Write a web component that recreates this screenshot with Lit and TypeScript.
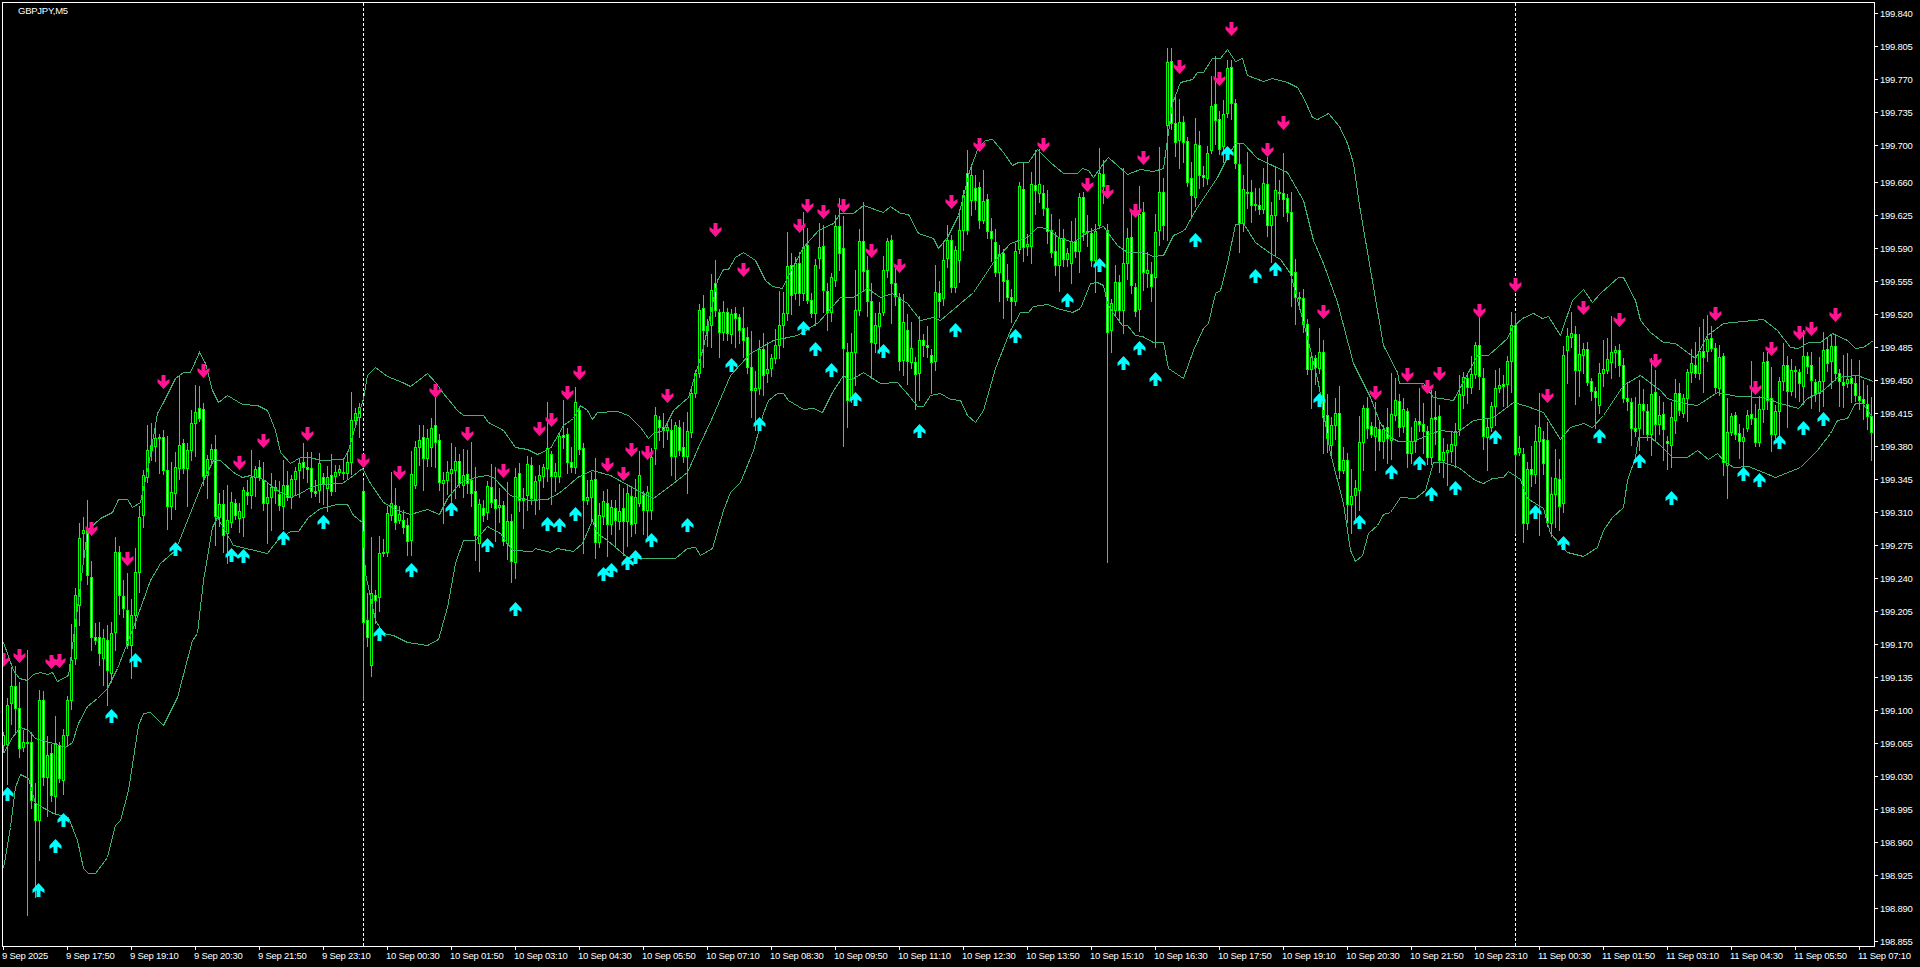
import { LitElement, html, css, svg } from 'lit';
import { customElement } from 'lit/decorators.js';

// [x, body top, body bottom] in chart pixels, one entry per M5 bar
const BODIES: number[][] = [
  [3,735,745],[7,705,744],[11,686,703],[15,686,708],[19,708,748],[23,742,747],[27,742,743],[31,742,800],[35,803,820],[39,700,820],
  [43,700,777],[47,755,777],[51,753,795],[55,743,796],[59,745,778],[63,735,780],[67,700,735],[71,660,700],[75,595,658],[79,538,605],
  [83,530,533],[87,530,575],[91,577,637],[95,637,640],[99,637,653],[103,638,658],[107,640,670],[111,633,673],[115,552,632],[119,552,595],
  [123,596,608],[127,610,645],[131,615,645],[135,572,615],[139,517,572],[143,475,515],[147,450,477],[151,445,450],[155,438,446],[159,437,438],
  [163,437,470],[167,470,506],[171,492,506],[175,467,493],[179,445,468],[183,443,468],[187,450,468],[191,423,450],[195,412,423],[199,408,418],
  [203,409,476],[207,459,475],[211,449,459],[215,449,516],[219,504,517],[223,504,535],[227,520,533],[231,502,522],[235,503,515],[239,511,518],
  [243,490,517],[247,492,495],[251,477,495],[255,469,477],[259,467,477],[263,480,503],[267,497,503],[271,487,497],[275,487,490],[279,494,505],
  [283,485,506],[287,485,497],[291,479,497],[295,471,479],[299,463,470],[303,462,467],[307,467,469],[311,468,491],[315,491,493],[319,463,490],
  [323,477,483],[327,477,488],[331,475,491],[335,472,476],[339,469,472],[343,472,473],[347,462,473],[351,420,462],[355,413,420],[359,407,417],
  [363,491,622],[367,620,637],[371,593,665],[375,595,600],[379,553,597],[383,552,553],[387,513,552],[391,503,515],[395,505,522],[399,514,520],
  [403,520,527],[407,525,541],[411,474,540],[415,447,485],[419,440,447],[423,437,458],[427,438,458],[431,428,447],[435,425,442],[439,440,482],
  [443,480,483],[447,472,480],[451,469,473],[455,461,470],[459,461,483],[463,475,485],[467,474,483],[471,480,493],[475,491,535],[479,504,543],
  [483,508,515],[487,486,512],[491,487,502],[495,499,508],[499,505,507],[503,505,541],[507,521,543],[511,521,561],[515,477,562],[519,473,500],
  [523,498,500],[527,464,495],[531,465,498],[535,481,499],[539,475,480],[543,467,476],[547,448,468],[551,454,476],[555,472,476],[559,436,476],
  [563,435,437],[567,434,462],[571,462,467],[575,402,467],[579,410,449],[583,448,500],[587,497,500],[591,480,497],[595,479,542],[599,515,542],
  [603,501,516],[607,503,524],[611,507,524],[615,508,520],[619,511,521],[623,508,521],[627,493,521],[631,496,524],[635,497,523],[639,475,503],
  [643,495,510],[647,492,510],[651,457,510],[655,415,448],[659,420,427],[663,427,430],[667,427,430],[671,430,456],[675,425,456],[679,427,450],
  [683,447,456],[687,431,456],[691,393,432],[695,373,393],[699,310,373],[703,308,330],[707,326,330],[711,290,325],[715,283,310],[719,312,332],
  [723,312,332],[727,312,333],[731,314,334],[735,313,318],[739,317,330],[743,328,340],[747,337,367],[751,367,390],[755,388,390],[759,349,388],
  [763,349,375],[767,369,373],[771,358,368],[775,345,358],[779,325,345],[783,313,325],[787,266,313],[791,265,295],[795,263,293],[799,263,293],
  [803,247,293],[807,245,300],[811,300,313],[815,265,313],[819,247,258],[823,246,290],[827,291,312],[831,277,312],[835,226,280],[839,226,253],
  [843,248,348],[847,352,400],[851,352,398],[855,310,352],[859,241,310],[863,241,271],[867,270,301],[871,301,342],[875,325,343],[879,313,326],
  [883,270,312],[887,241,270],[891,240,283],[895,283,296],[899,297,361],[903,322,360],[907,330,361],[911,348,362],[915,362,374],[919,340,373],
  [923,340,345],[927,345,347],[931,355,362],[935,292,361],[939,293,301],[943,260,298],[947,240,258],[951,240,287],[955,250,287],[959,230,260],
  [963,195,230],[967,173,230],[971,175,200],[975,188,200],[979,187,220],[983,201,220],[987,199,231],[991,231,238],[995,242,272],[999,254,272],
  [1003,253,281],[1007,280,297],[1011,297,301],[1015,251,301],[1019,186,249],[1023,189,247],[1027,244,246],[1031,184,246],[1035,185,190],[1039,184,193],
  [1043,193,208],[1047,208,231],[1051,230,252],[1055,251,265],[1059,238,265],[1063,238,259],[1067,253,259],[1071,241,263],[1075,241,251],[1079,197,251],
  [1083,197,232],[1087,231,232],[1091,233,260],[1095,231,260],[1099,173,225],[1103,174,186],[1107,230,332],[1111,303,330],[1115,282,310],[1119,282,310],
  [1123,263,310],[1127,238,263],[1131,237,285],[1135,287,311],[1139,214,309],[1143,212,272],[1147,270,273],[1151,274,286],[1155,232,277],[1159,192,230],
  [1163,192,225],[1167,62,125],[1171,61,123],[1175,123,142],[1179,122,140],[1183,122,142],[1187,141,182],[1191,178,195],[1195,144,197],[1199,145,175],
  [1203,175,177],[1207,153,178],[1211,106,150],[1215,104,120],[1219,119,149],[1223,114,146],[1227,68,113],[1231,67,103],[1235,103,163],[1239,164,223],
  [1243,189,223],[1247,192,193],[1251,192,205],[1255,204,205],[1259,205,209],[1263,183,209],[1267,184,225],[1271,215,225],[1275,190,215],[1279,192,193],
  [1283,193,199],[1287,198,212],[1291,212,275],[1295,272,297],[1299,297,298],[1303,298,324],[1307,324,369],[1311,357,369],[1315,358,367],[1319,352,368],
  [1323,352,417],[1327,415,438],[1331,425,445],[1335,413,425],[1339,413,470],[1343,460,470],[1347,460,504],[1351,496,504],[1355,488,495],[1359,442,490],
  [1363,408,442],[1367,408,428],[1371,426,434],[1375,427,436],[1379,429,441],[1383,429,441],[1387,427,438],[1391,414,440],[1395,400,415],[1399,401,427],
  [1403,409,426],[1407,411,453],[1411,441,453],[1415,421,441],[1419,421,424],[1423,424,431],[1427,431,457],[1431,418,457],[1435,417,419],[1439,416,460],
  [1443,452,460],[1447,450,452],[1451,444,451],[1455,431,445],[1459,394,429],[1463,377,395],[1467,378,387],[1471,374,387],[1475,345,374],[1479,345,376],
  [1483,378,436],[1487,427,437],[1491,406,427],[1495,388,406],[1499,385,388],[1503,384,386],[1507,361,384],[1511,325,361],[1515,325,454],[1519,448,452],
  [1523,454,523],[1527,469,523],[1531,469,474],[1535,441,474],[1539,427,441],[1543,439,463],[1547,440,522],[1551,494,523],[1555,478,494],[1559,479,506],
  [1563,355,503],[1567,336,350],[1571,333,337],[1575,334,370],[1579,354,370],[1583,349,355],[1587,349,382],[1591,381,391],[1595,391,397],[1599,373,405],
  [1603,369,373],[1607,359,370],[1611,352,362],[1615,350,352],[1619,350,365],[1623,365,398],[1627,398,401],[1631,402,428],[1635,428,431],[1639,404,428],
  [1643,404,410],[1647,411,434],[1651,394,434],[1655,392,424],[1659,415,424],[1663,414,429],[1667,441,443],[1671,417,445],[1675,393,420],[1679,393,410],
  [1683,398,413],[1687,372,398],[1691,363,372],[1695,365,373],[1699,351,373],[1703,351,357],[1707,339,351],[1711,338,348],[1715,348,387],[1719,357,388],
  [1723,356,462],[1727,432,465],[1731,416,432],[1735,415,434],[1739,433,441],[1743,437,441],[1747,415,428],[1751,414,418],[1755,418,442],[1759,409,442],
  [1763,362,409],[1767,361,400],[1771,398,434],[1775,411,434],[1779,381,411],[1783,365,381],[1787,365,391],[1791,370,391],[1795,370,371],[1799,372,383],
  [1803,356,386],[1807,356,366],[1811,365,380],[1815,382,393],[1819,381,393],[1823,350,381],[1827,349,363],[1831,346,361],[1835,346,373],[1839,373,381],
  [1843,382,385],[1847,379,383],[1851,378,383],[1855,383,395],[1859,396,400],[1863,399,403],[1867,404,416],[1871,416,432],
];

// wicks that stand out; 0 = keep the generated end
const WICKS: Record<number, number[]> = {
  27:[650,915],35:[783,897],39:[690,860],87:[500,0],107:[625,705],179:[376,0],199:[386,0],215:[0,545],223:[0,552],
  363:[0,700],371:[537,676],391:[472,0],471:[442,0],475:[0,560],511:[0,582],515:[0,578],547:[402,0],575:[387,0],583:[0,553],
  687:[0,493],715:[260,0],719:[0,357],755:[0,430],787:[232,0],803:[212,0],843:[216,446],847:[0,427],863:[202,0],919:[0,400],
  1011:[0,322],1015:[0,305],1031:[172,0],1035:[150,0],1099:[148,0],1103:[160,0],1107:[0,562],1123:[168,333],1155:[0,347],1159:[147,245],
  1167:[48,240],1171:[48,0],1215:[56,0],1227:[60,0],1231:[60,0],1239:[0,252],1247:[152,0],1263:[168,0],1271:[0,262],1283:[153,0],
  1319:[328,0],1351:[0,533],1375:[0,470],1395:[378,0],1419:[388,0],1439:[405,472],1487:[0,470],1511:[312,0],1515:[313,533],1523:[0,542],
  1539:[393,535],1559:[0,530],1563:[0,512],1639:[380,0],1671:[0,467],1699:[327,0],1707:[315,0],1727:[0,498],1739:[0,458],1751:[361,0],
  1767:[352,0],1827:[338,0],1851:[359,0],1871:[0,460],
};

const UPPER: number[][] = [
  [3,642],[13,670],[19,678],[27,680],[33,674],[40,672],[47,674],[52,672],[57,681],[68,675],[78,600],[87,530],[100,518],[112,512],[118,499],[127,499],[132,507],[140,502],
  [148,465],[157,413],[163,402],[175,378],[183,372],[190,372],[199,352],[205,363],[212,390],[218,402],[227,395],[242,404],[257,405],[267,410],[275,430],[280,452],[290,463],
  [300,457],[310,457],[320,460],[343,459],[348,450],[363,398],[367,375],[375,367],[387,376],[402,382],[410,386],[418,380],[427,373],[435,382],[443,393],[457,410],[463,415],
  [483,415],[488,422],[503,430],[515,447],[527,449],[537,454],[550,448],[563,425],[573,418],[580,405],[587,410],[592,419],[597,412],[617,411],[628,415],[640,427],[648,438],
  [653,433],[663,430],[673,410],[688,397],[703,347],[717,280],[723,269],[728,269],[735,257],[743,252],[755,260],[765,280],[772,286],[782,288],[788,275],[803,247],[818,230],
  [833,223],[840,213],[853,213],[863,205],[883,212],[890,206],[900,213],[908,214],[918,233],[933,238],[938,248],[947,237],[958,215],[970,168],[978,147],[985,140],[992,139],
  [1003,152],[1012,165],[1018,162],[1028,162],[1037,149],[1050,162],[1063,173],[1077,173],[1082,168],[1088,170],[1093,177],[1103,163],[1108,157],[1127,174],[1140,169],[1153,171],
  [1163,168],[1172,103],[1180,82],[1192,79],[1197,72],[1203,72],[1212,58],[1220,58],[1227,49],[1235,61],[1242,58],[1247,75],[1263,81],[1272,78],[1287,82],[1297,87],[1303,97],
  [1312,117],[1317,119],[1328,113],[1339,126],[1347,143],[1353,163],[1359,205],[1365,240],[1383,345],[1397,372],[1399,383],[1413,383],[1423,383],[1433,397],[1453,400],[1477,355],
  [1488,355],[1507,338],[1512,327],[1522,318],[1533,313],[1542,318],[1548,316],[1560,335],[1572,300],[1583,289],[1592,302],[1600,293],[1618,277],[1623,277],[1635,300],[1640,320],
  [1650,332],[1663,342],[1675,343],[1695,358],[1707,335],[1723,323],[1763,319],[1777,330],[1790,347],[1798,348],[1808,342],[1820,342],[1832,333],[1847,340],[1855,348],[1863,347],[1873,340],
];

const MIDDLE: number[][] = [
  [3,753],[12,737],[20,727],[28,730],[35,738],[53,743],[65,747],[72,742],[78,723],[87,706],[97,698],[107,688],[117,668],[133,627],[150,580],[160,563],[175,550],[187,520],[203,480],
  [213,460],[220,460],[233,472],[242,477],[250,475],[263,479],[277,490],[290,497],[300,493],[310,487],[320,484],[342,483],[353,475],[362,468],[370,483],[383,502],[397,510],[410,514],
  [427,509],[439,514],[447,498],[460,482],[475,477],[487,475],[493,477],[510,495],[528,500],[547,499],[558,493],[567,486],[577,477],[592,470],[610,475],[637,490],[653,498],[673,483],
  [687,472],[698,447],[712,417],[730,375],[750,353],[773,340],[797,335],[818,322],[840,297],[853,297],[867,288],[880,297],[892,293],[907,303],[920,320],[933,317],[940,320],[960,303],
  [973,292],[993,262],[1010,243],[1027,237],[1037,227],[1047,228],[1058,237],[1073,242],[1087,232],[1103,226],[1117,245],[1127,252],[1143,252],[1153,256],[1163,255],[1173,235],[1184,230],
  [1195,210],[1205,195],[1217,177],[1227,157],[1235,143],[1243,143],[1257,158],[1287,172],[1303,200],[1313,240],[1323,263],[1337,302],[1353,363],[1370,397],[1380,423],[1390,437],[1398,441],
  [1413,441],[1427,435],[1440,430],[1457,432],[1473,420],[1493,417],[1513,402],[1527,406],[1543,412],[1560,439],[1570,427],[1583,423],[1592,427],[1603,415],[1623,385],[1640,375],[1660,390],
  [1667,398],[1683,403],[1697,405],[1717,392],[1737,396],[1763,397],[1780,403],[1798,408],[1807,398],[1823,390],[1837,377],[1857,375],[1873,381],
];

const LOWER: number[][] = [
  [3,868],[10,827],[15,787],[20,774],[28,778],[35,803],[53,813],[68,817],[77,840],[83,868],[88,873],[95,873],[107,857],[115,825],[120,820],[128,790],[138,725],[143,713],[150,712],[163,725],
  [177,697],[192,640],[197,633],[203,580],[212,527],[217,517],[233,545],[250,549],[267,553],[277,540],[290,531],[298,531],[308,517],[320,508],[337,504],[347,504],[353,515],[362,522],[365,573],
  [375,620],[383,633],[393,635],[407,642],[427,645],[438,639],[447,607],[455,563],[463,540],[475,540],[487,526],[500,533],[512,550],[532,551],[535,548],[550,552],[557,548],[573,551],[582,543],
  [592,520],[597,533],[607,540],[627,557],[640,558],[657,558],[675,558],[687,548],[695,547],[700,555],[712,548],[723,510],[730,492],[740,482],[753,450],[763,413],[768,400],[777,393],[783,393],
  [788,400],[803,409],[813,408],[822,412],[832,392],[843,375],[850,380],[863,372],[880,383],[897,382],[910,397],[917,406],[923,406],[930,395],[940,393],[950,399],[960,400],[967,415],[975,422],
  [983,410],[995,368],[1010,330],[1020,312],[1028,312],[1033,306],[1047,304],[1057,308],[1072,312],[1080,308],[1090,283],[1097,282],[1103,285],[1107,303],[1113,313],[1122,325],[1127,325],
  [1135,335],[1142,336],[1153,342],[1163,342],[1168,368],[1183,378],[1193,350],[1203,328],[1208,323],[1215,293],[1220,290],[1227,263],[1235,224],[1243,223],[1255,242],[1270,253],[1280,259],
  [1290,273],[1307,337],[1318,383],[1330,453],[1343,503],[1350,550],[1355,561],[1362,555],[1368,533],[1377,525],[1383,514],[1390,512],[1400,497],[1415,498],[1425,490],[1433,462],[1443,462],
  [1458,467],[1475,480],[1483,483],[1492,478],[1503,477],[1508,471],[1520,479],[1527,498],[1543,508],[1550,533],[1567,552],[1583,556],[1597,547],[1603,530],[1612,517],[1623,507],[1627,480],
  [1635,457],[1638,437],[1650,437],[1660,445],[1672,457],[1687,457],[1697,450],[1708,459],[1717,453],[1723,460],[1733,467],[1748,466],[1763,472],[1775,477],[1785,473],[1800,467],[1817,450],
  [1830,433],[1837,420],[1847,418],[1855,403],[1862,403],[1873,418],
];

// [center x, tip y]
const UP_ARROWS: number[][] = [
  [38,883],[55,839],[63,813],[7,787],[111,709],[135,653],[175,542],[231,548],[243,549],[283,531],[323,515],[379,627],[411,563],[451,502],[487,538],[515,602],[547,517],[559,518],[575,507],
  [603,567],[611,563],[627,556],[635,550],[651,533],[687,518],[731,358],[759,417],[803,321],[815,342],[831,363],[855,392],[883,344],[919,424],[955,323],[1015,329],[1067,293],[1099,258],
  [1123,356],[1139,341],[1155,372],[1195,233],[1227,146],[1255,269],[1275,262],[1319,393],[1359,515],[1391,465],[1419,456],[1431,487],[1455,481],[1495,430],[1535,505],[1563,536],[1599,429],
  [1639,454],[1671,491],[1743,467],[1759,473],[1779,435],[1803,421],[1823,412],
];

// [center x, top of shaft y]
const DOWN_ARROWS: number[][] = [
  [3,653],[19,649],[51,655],[59,654],[91,522],[127,552],[163,375],[203,364],[239,456],[263,434],[307,427],[363,454],[399,466],[435,384],[467,427],[503,464],[539,422],[551,413],[567,386],
  [579,366],[607,458],[623,467],[631,443],[647,446],[667,389],[715,223],[743,263],[799,219],[807,199],[823,205],[843,199],[871,244],[899,259],[951,195],[979,138],[1043,138],[1087,178],
  [1107,185],[1135,204],[1143,151],[1179,60],[1219,72],[1231,22],[1267,143],[1283,116],[1323,305],[1375,386],[1407,368],[1427,380],[1439,367],[1479,304],[1515,278],[1547,389],[1583,301],
  [1619,313],[1655,354],[1715,307],[1755,381],[1771,342],[1799,326],[1811,322],[1835,308],
];

const PRICES = ['199.840','199.805','199.770','199.735','199.700','199.660','199.625','199.590','199.555','199.520','199.485','199.450','199.415','199.380','199.345','199.310','199.275','199.240','199.205','199.170','199.135','199.100','199.065','199.030','198.995','198.960','198.925','198.890','198.855'];

const TIMES = ['9 Sep 2025','9 Sep 17:50','9 Sep 19:10','9 Sep 20:30','9 Sep 21:50','9 Sep 23:10','10 Sep 00:30','10 Sep 01:50','10 Sep 03:10','10 Sep 04:30','10 Sep 05:50','10 Sep 07:10','10 Sep 08:30','10 Sep 09:50','10 Sep 11:10','10 Sep 12:30','10 Sep 13:50','10 Sep 15:10','10 Sep 16:30','10 Sep 17:50','10 Sep 19:10','10 Sep 20:30','10 Sep 21:50','10 Sep 23:10','11 Sep 00:30','11 Sep 01:50','11 Sep 03:10','11 Sep 04:30','11 Sep 05:50','11 Sep 07:10'];

function rng(seed: number) {
  return () => {
    seed = (seed + 0x6d2b79f5) | 0;
    let t = Math.imul(seed ^ (seed >>> 15), 1 | seed);
    t = (t + Math.imul(t ^ (t >>> 7), 61 | t)) ^ t;
    return ((t ^ (t >>> 14)) >>> 0) / 4294967296;
  };
}

function buildCandles() {
  const rand = rng(20250909);
  let wicks = '';
  let falling = '';
  let rising = '';
  let prevClose = BODIES[0][2];
  for (const [x, top, bottom] of BODIES) {
    const fixed = WICKS[x] ?? [0, 0];
    const high = fixed[0] || top - Math.round(3 + rand() * rand() * 42);
    const low = fixed[1] || bottom + Math.round(3 + rand() * rand() * 42);
    wicks += `M${x + 0.5} ${high}V${low + 1}`;
    // a bar whose top sits nearer the last close opened there and fell
    const opensAtTop = Math.abs(top - prevClose) <= Math.abs(bottom - prevClose);
    const rect = `M${x - 0.5} ${top + 0.5}h2v${bottom - top}h-2z`;
    if (opensAtTop) falling += rect;
    else rising += rect;
    prevClose = opensAtTop ? bottom : top;
  }
  return { wicks, falling, rising };
}

const points = (line: number[][]) => line.map(([x, y]) => `${x + 0.5},${y + 0.5}`).join(' ');

function arrows(list: number[][], dir: 1 | -1) {
  return list
    .map(([x, y]) => {
      const c = x + 0.5;
      const tip = dir === 1 ? y : y + 14;
      const p = (dx: number, dy: number) => `${c + dx} ${tip + dir * dy}`;
      return `M${p(0, 0)}L${p(6, 6.5)}L${p(6, 10)}L${p(2, 7.5)}L${p(2, 14)}L${p(-2, 14)}L${p(-2, 7.5)}L${p(-6, 10)}L${p(-6, 6.5)}z`;
    })
    .join('');
}

@customElement('app-root')
export class AppRoot extends LitElement {
  static styles = css`
    :host {
      display: block;
      width: 1920px;
      height: 967px;
      background: #000;
      overflow: hidden;
      color: #fff;
      font-family: 'Liberation Sans', Arial, sans-serif;
      font-size: 9.5px;
      letter-spacing: -0.25px;
    }
    .page {
      display: grid;
      grid-template-columns: 1875px 45px;
      grid-template-rows: 947px 20px;
      position: relative;
    }
    .chart {
      display: block;
    }
    .title {
      position: absolute;
      left: 18px;
      top: 5px;
      line-height: 11px;
    }
    .frame {
      fill: none;
      stroke: #fff;
      shape-rendering: crispEdges;
    }
    .sep {
      stroke: #fff;
      stroke-dasharray: 3 2;
      shape-rendering: crispEdges;
    }
    .wick {
      fill: none;
      stroke: #00ff00;
      shape-rendering: crispEdges;
    }
    .fall {
      fill: #fff;
      stroke: #00ff00;
      shape-rendering: crispEdges;
    }
    .rise {
      fill: #000;
      stroke: #00ff00;
      shape-rendering: crispEdges;
    }
    .band {
      fill: none;
      stroke: #3cb371;
      shape-rendering: crispEdges;
    }
    .up {
      fill: #00ffff;
    }
    .down {
      fill: #ff1493;
    }
    .prices {
      display: flex;
      flex-direction: column;
      margin-top: -3px;
    }
    .price {
      display: flex;
      align-items: center;
      gap: 2px;
      height: 33px;
      flex: none;
    }
    .price.jump {
      margin-top: 4px;
    }
    .price i {
      width: 3px;
      height: 1px;
      background: #fff;
    }
    .times {
      grid-column: 1 / 3;
      display: grid;
      grid-auto-flow: column;
      grid-auto-columns: 64px;
      padding-left: 2px;
    }
    .time {
      white-space: nowrap;
      line-height: 12px;
    }
    .time i {
      display: block;
      width: 1px;
      height: 3px;
      margin-left: 1px;
      background: #fff;
    }
  `;

  render() {
    const c = buildCandles();
    return html`
      <div class="page">
        <svg class="chart" width="1875" height="947" viewBox="0 0 1875 947">
          <defs>
            <clipPath id="plot"><rect x="3" y="3" width="1871" height="943"></rect></clipPath>
          </defs>
          ${[363, 1515].map((x) => svg`<line class="sep" x1=${x + 0.5} y1="3" x2=${x + 0.5} y2="946"></line>`)}
          <g clip-path="url(#plot)">
            <path class="wick" d=${c.wicks}></path>
            <path class="fall" d=${c.falling}></path>
            <path class="rise" d=${c.rising}></path>
            ${[UPPER, MIDDLE, LOWER].map((l) => svg`<polyline class="band" points=${points(l)}></polyline>`)}
            <path class="up" d=${arrows(UP_ARROWS, 1)}></path>
            <path class="down" d=${arrows(DOWN_ARROWS, -1)}></path>
          </g>
          <rect class="frame" x="2.5" y="2.5" width="1872" height="944"></rect>
        </svg>
        <div class="title">GBPJPY,M5</div>
        <div class="prices">
          ${PRICES.map((p, i) => html`<div class="price ${i === 5 ? 'jump' : ''}"><i></i>${p}</div>`)}
        </div>
        <div class="times">
          ${TIMES.map((t) => html`<div class="time"><i></i>${t}</div>`)}
        </div>
      </div>
    `;
  }
}
